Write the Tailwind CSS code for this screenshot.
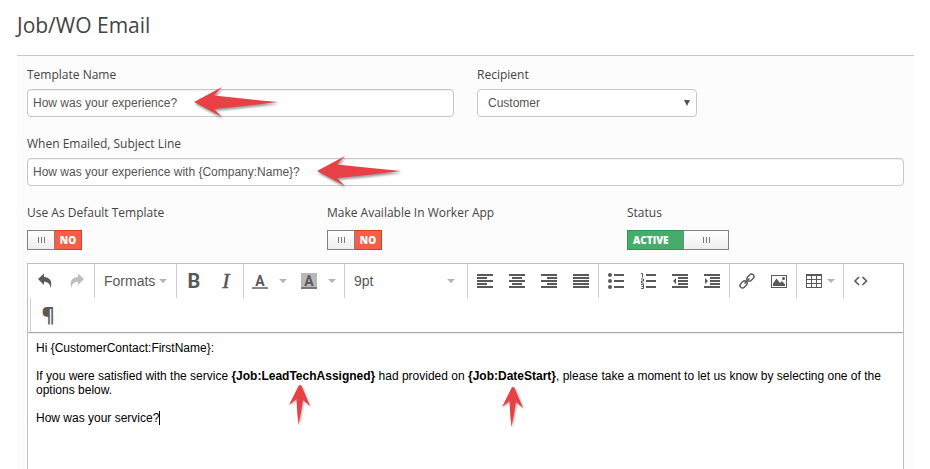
<!DOCTYPE html>
<html lang="en">

<head>
    <meta charset="UTF-8">
    <meta name="viewport" content="width=device-width, initial-scale=1.0">
    <title>Job/WO Email</title>
    <script src="https://cdn.jsdelivr.net/npm/@tailwindcss/browser@4"></script>
</head>

<body class="bg-white text-[#444] font-['Open_Sans',sans-serif]">
    <!-- shapes used more than once -->
    <svg class="hidden">
        <symbol id="arrow-left" viewBox="0 0 88 34">
            <path d="M1 16L29 1L21 9.500Q54 13 85 16Q54 20 21 23L29 31Z" fill="#e84145" />
        </symbol>
        <symbol id="arrow-up" viewBox="0 0 24 44">
            <path d="M12 1Q13.500 1 14 3L22 22L15 16Q13 29 10.500 41Q9 29 8.500 15L1 21L10 3Q10.500 1 12 1Z" fill="#e84145" />
        </symbol>
        <symbol id="caret" viewBox="0 0 8 4">
            <path d="M0 0h8L4 4z" fill="#b0b5ba" />
        </symbol>
    </svg>

    <div class="min-h-screen flex flex-col pl-[17px] pr-4">
        <h1 class="h-[55px] pt-2 text-[21px] leading-[34px] text-[#444]">Job/WO Email</h1>
        <main class="flex-1 flex flex-col bg-[#fcfcfc] border-t border-[#c8c8c8] px-[10px] pt-[10px]">
            <div class="grid grid-cols-2 gap-x-[23px]">
                <div class="relative">
                    <label for="name" class="block text-[12px] leading-[18px] mb-[5px]">Template Name</label>
                    <input id="name" type="text" value="How was your experience?"
                        class="block w-full h-7 px-[5px] rounded border border-[#c8c8c8] bg-white text-[12px] text-[#555] font-['Liberation_Sans',sans-serif] shadow-[inset_0_1px_1px_#0001]">
                    <svg class="absolute left-[166px] top-[20px] w-[88px] h-[34px] drop-shadow-[1px_2px_1px_#0006]"><use href="#arrow-left" /></svg>
                </div>
                <div>
                    <label for="recipient" class="block text-[12px] leading-[18px] mb-[5px]">Recipient</label>
                    <div class="relative w-[220px]">
                        <select id="recipient"
                            class="block appearance-none w-full h-7 px-[10px] rounded border border-[#c8c8c8] bg-white text-[12px] text-[#555] font-['Liberation_Sans',sans-serif]">
                            <option>Customer</option>
                        </select>
                        <svg class="absolute right-[7px] top-[11px] pointer-events-none" width="6" height="6" viewBox="0 0 6 6"><path d="M0 0h6L3 6z" fill="#555" /></svg>
                    </div>
                </div>
            </div>

            <div class="relative mt-[18px]">
                <label for="subject" class="block text-[12px] leading-[18px] mb-[5px]">When Emailed, Subject Line</label>
                <input id="subject" type="text" value="How was your experience with {Company:Name}?"
                    class="block w-full h-7 px-[5px] rounded border border-[#c8c8c8] bg-white text-[12px] text-[#555] font-['Liberation_Sans',sans-serif] shadow-[inset_0_1px_1px_#0001]">
                <svg class="absolute left-[289px] top-[20px] w-[88px] h-[34px] drop-shadow-[1px_2px_1px_#0006]"><use href="#arrow-left" /></svg>
            </div>

            <div class="grid grid-cols-3 gap-x-[23px] mt-[18px] mb-[13px]">
                <label class="block text-[12px] leading-[18px]">Use As Default Template
                    <input type="checkbox" class="sr-only">
                    <span class="flex w-[55px] h-5 mt-[8px] text-[10px] font-extrabold text-white">
                        <span class="w-7 flex items-center justify-center gap-[2px] border border-[#808080] bg-linear-to-b from-white to-[#eee]">
                            <i class="w-px h-[6px] bg-[#777]"></i><i class="w-px h-[6px] bg-[#777]"></i><i class="w-px h-[6px] bg-[#777]"></i>
                        </span>
                        <span class="flex-1 flex items-center justify-center border border-l-0 border-[#e23a22] bg-[#f55f48]">NO</span>
                    </span>
                </label>
                <label class="block text-[12px] leading-[18px]">Make Available In Worker App
                    <input type="checkbox" class="sr-only">
                    <span class="flex w-[55px] h-5 mt-[8px] text-[10px] font-extrabold text-white">
                        <span class="w-7 flex items-center justify-center gap-[2px] border border-[#808080] bg-linear-to-b from-white to-[#eee]">
                            <i class="w-px h-[6px] bg-[#777]"></i><i class="w-px h-[6px] bg-[#777]"></i><i class="w-px h-[6px] bg-[#777]"></i>
                        </span>
                        <span class="flex-1 flex items-center justify-center border border-l-0 border-[#e23a22] bg-[#f55f48]">NO</span>
                    </span>
                </label>
                <label class="block text-[12px] leading-[18px]">Status
                    <input type="checkbox" class="sr-only" checked>
                    <span class="flex w-[102px] h-5 mt-[8px] text-[10px] font-extrabold text-white">
                        <span class="flex-1 flex items-center pl-[5px] border border-r-0 border-[#379058] bg-[#45ad6b]">ACTIVE</span>
                        <span class="w-[46px] flex items-center justify-center gap-[2px] border border-[#808080] bg-linear-to-b from-white to-[#eee]">
                            <i class="w-px h-[6px] bg-[#777]"></i><i class="w-px h-[6px] bg-[#777]"></i><i class="w-px h-[6px] bg-[#777]"></i>
                        </span>
                    </span>
                </label>
            </div>

            <div class="flex-1 flex flex-col border border-b-0 border-[#c0c0c0] bg-white">
                <div role="toolbar" class="flex flex-wrap border-b border-[#a8a8a8] text-[#595959] text-[14px] font-['Liberation_Sans',sans-serif]">
                    <div class="flex h-[34px] px-px">
                        <button aria-label="Undo" class="w-8 grid place-items-center">
                            <svg width="16" height="16" viewBox="0 0 16 16"><path d="M1 6L7 .500V4C12.500 4 16 8 13.500 15.500C13.500 11 11 8.700 7 8.700V12Z" fill="currentColor" /></svg>
                        </button>
                        <button aria-label="Redo" disabled class="w-8 grid place-items-center text-[#bdbdbd]">
                            <svg width="16" height="16" viewBox="0 0 16 16"><path d="M15 6L9 .500V4C3.500 4 0 8 2.500 15.500C2.500 11 5 8.700 9 8.700V12Z" fill="currentColor" /></svg>
                        </button>
                    </div>
                    <div class="flex h-[34px] px-px border-l border-[#d0d0d0]">
                        <button class="w-[79px] flex items-center justify-between px-2">Formats
                            <svg class="w-2 h-1"><use href="#caret" /></svg></button>
                    </div>
                    <div class="flex h-[34px] px-px border-l border-[#d0d0d0]">
                        <button aria-label="Bold" class="w-8 grid place-items-center text-[20px] leading-5 font-bold font-['Roboto',sans-serif]">B</button>
                        <button aria-label="Italic" class="w-8 grid place-items-center text-[22px] leading-5 italic font-['Liberation_Serif',serif] [-webkit-text-stroke:0.5px]">I</button>
                    </div>
                    <div class="flex h-[34px] px-px border-l border-[#d0d0d0]">
                        <button aria-label="Text color" class="w-[49px] flex items-center justify-between px-[7px]">
                            <span class="w-4 h-4 border-b-2 border-[#888] text-[14px] leading-4 font-bold text-center font-['Roboto',sans-serif]">A</span>
                            <svg class="w-2 h-1"><use href="#caret" /></svg>
                        </button>
                        <button aria-label="Background color" class="w-[49px] flex items-center justify-between px-[7px]">
                            <span class="w-4 h-4 border-b-2 border-[#777] bg-[#b8b8b8] text-[14px] leading-4 font-bold text-center font-['Roboto',sans-serif]">A</span>
                            <svg class="w-2 h-1"><use href="#caret" /></svg>
                        </button>
                    </div>
                    <div class="flex h-[34px] px-px border-l border-[#d0d0d0]">
                        <button aria-label="Font size" class="w-[120px] flex items-center justify-between pl-2 pr-[11px]">9pt
                            <svg class="w-2 h-1"><use href="#caret" /></svg></button>
                    </div>
                    <div class="flex h-[34px] px-px border-l border-[#d0d0d0]">
                        <button aria-label="Align left" class="w-8 grid place-items-center">
                            <svg width="16" height="16" viewBox="0 0 16 16" fill="currentColor"><path d="M0 1h16v2H0zM0 4h10v2H0zM0 7h16v2H0zM0 10h10v2H0zM0 13h16v2H0z" /></svg>
                        </button>
                        <button aria-label="Align center" class="w-8 grid place-items-center">
                            <svg width="16" height="16" viewBox="0 0 16 16" fill="currentColor"><path d="M0 1h16v2H0zM3 4h10v2H3zM0 7h16v2H0zM3 10h10v2H3zM0 13h16v2H0z" /></svg>
                        </button>
                        <button aria-label="Align right" class="w-8 grid place-items-center">
                            <svg width="16" height="16" viewBox="0 0 16 16" fill="currentColor"><path d="M0 1h16v2H0zM6 4h10v2H6zM0 7h16v2H0zM6 10h10v2H6zM0 13h16v2H0z" /></svg>
                        </button>
                        <button aria-label="Justify" class="w-8 grid place-items-center">
                            <svg width="16" height="16" viewBox="0 0 16 16" fill="currentColor"><path d="M0 1h16v2H0zM0 4h16v2H0zM0 7h16v2H0zM0 10h16v2H0zM0 13h16v2H0z" /></svg>
                        </button>
                    </div>
                    <div class="flex h-[34px] px-px border-l border-[#d0d0d0]">
                        <button aria-label="Bullet list" class="w-8 grid place-items-center">
                            <svg width="16" height="16" viewBox="0 0 16 16" fill="currentColor"><path d="M6 1h10v2H6zM6 7h10v2H6zM6 13h10v2H6z" /><circle cx="2" cy="2" r="2" /><circle cx="2" cy="8" r="2" /><circle cx="2" cy="14" r="2" /></svg>
                        </button>
                        <button aria-label="Numbered list" class="w-8 grid place-items-center">
                            <svg width="16" height="16" viewBox="0 0 16 16" fill="currentColor"><path d="M6 1h10v2H6zM6 7h10v2H6zM6 13h10v2H6z" /><path d="M1 .500H2.500V4.500M1 6H3.500V8H1.500V10H4M1 11.500H3.500V15.500H1M1.500 13.500H3.500" fill="none" stroke="currentColor" /></svg>
                        </button>
                        <button aria-label="Decrease indent" class="w-8 grid place-items-center">
                            <svg width="16" height="16" viewBox="0 0 16 16" fill="currentColor"><path d="M0 1h16v2H0zM6 4h10v2H6zM6 7h10v2H6zM6 10h10v2H6zM0 13h16v2H0zM4 5v6L1 8z" /></svg>
                        </button>
                        <button aria-label="Increase indent" class="w-8 grid place-items-center">
                            <svg width="16" height="16" viewBox="0 0 16 16" fill="currentColor"><path d="M0 1h16v2H0zM6 4h10v2H6zM6 7h10v2H6zM6 10h10v2H6zM0 13h16v2H0zM1 5v6L4 8z" /></svg>
                        </button>
                    </div>
                    <div class="flex h-[34px] px-px border-l border-[#d0d0d0]">
                        <button aria-label="Insert link" class="w-8 grid place-items-center">
                            <svg width="16" height="16" viewBox="0 0 16 16" fill="none" stroke="currentColor" stroke-width="1.400"><rect x="-4" y="-2.500" width="8" height="5" rx="2.500" transform="translate(11.400 4.600) rotate(-45)" /><rect x="-4" y="-2.500" width="8" height="5" rx="2.500" transform="translate(4.600 11.400) rotate(-45)" /><path d="M5.500 10.500l5-5" /></svg>
                        </button>
                        <button aria-label="Insert image" class="w-8 grid place-items-center">
                            <svg width="16" height="16" viewBox="0 0 16 16" fill="currentColor"><path d="M0 2h16v13H0zM1 3v11h14V3z" fill-rule="evenodd" /><path d="M2 13V10.500L5.500 5.500L9 10L11 8L14 11.500V13Z" /><circle cx="12.500" cy="5.500" r="1.500" /></svg>
                        </button>
                    </div>
                    <div class="flex h-[34px] px-px border-l border-[#d0d0d0]">
                        <button aria-label="Table" class="w-[44px] flex items-center justify-between pl-2 pr-[7px]">
                            <svg width="16" height="16" viewBox="0 0 16 16" fill="currentColor"><path d="M0 1h16v14H0zM1 3v3h4V3zM6 3v3h4V3zM11 3v3h4V3zM1 7v3h4V7zM6 7v3h4V7zM11 7v3h4V7zM1 11v3h4v-3zM6 11v3h4v-3zM11 11v3h4v-3z" fill-rule="evenodd" /></svg>
                            <svg class="w-2 h-1"><use href="#caret" /></svg>
                        </button>
                    </div>
                    <div class="flex h-[34px] px-px border-l border-[#d0d0d0]">
                        <button aria-label="Source code" class="w-8 grid place-items-center">
                            <svg width="16" height="16" viewBox="0 0 16 16" fill="none" stroke="currentColor" stroke-width="1.600"><path d="M6 4L2 8L6 12M9.500 4L13.500 8L9.500 12" /></svg>
                        </button>
                    </div>
                    <div class="w-full h-[34px] flex pl-[2px]">
                        <div class="flex px-px border-l border-[#d0d0d0]">
                            <button aria-label="Show blocks" class="w-8 grid place-items-center text-[20px] leading-5 font-bold font-['Open_Sans',sans-serif]">¶</button>
                        </div>
                    </div>
                </div>
                <div class="relative flex-1 p-2 shadow-[inset_0_1px_0_#eee] text-[12px] leading-[14px] text-black font-['Liberation_Sans',sans-serif]">
                    <div contenteditable="true" role="textbox" aria-label="Message" class="space-y-[14px] outline-none">
                        <p>Hi {CustomerContact:FirstName}:</p>
                        <p>If you were satisfied with the service <b>{Job:LeadTechAssigned}</b> had provided on <b>{Job:DateStart}</b>, please take a moment to let us know by selecting one of the options below.</p>
                        <p class="flex">How was your service?<span class="w-px h-[14px] bg-black"></span></p>
                    </div>
                    <svg class="absolute left-[260px] top-[51px] w-6 h-11 drop-shadow-[1px_1px_1px_#0005]"><use href="#arrow-up" /></svg>
                    <svg class="absolute left-[473px] top-[53px] w-6 h-11 drop-shadow-[1px_1px_1px_#0005]"><use href="#arrow-up" /></svg>
                </div>
            </div>
        </main>
    </div>
</body>

</html>
